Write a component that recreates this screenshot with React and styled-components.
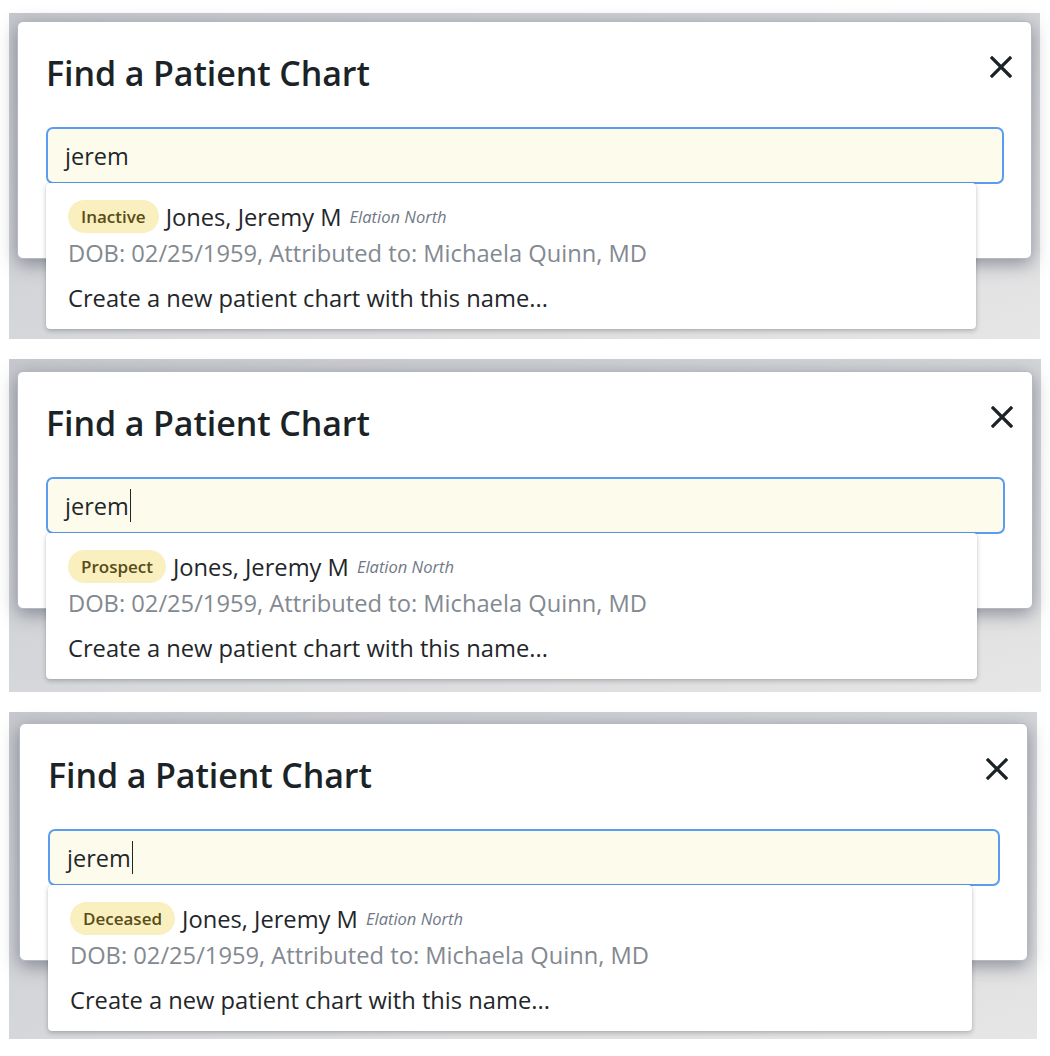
import React from "react"
import styled, { createGlobalStyle } from "styled-components"

const GlobalStyle = createGlobalStyle`
    html, body {
        margin: 0;
        padding: 0;
        background: #ffffff;
    }
    body {
        font-family: "Open Sans", "Noto Sans", Arial, sans-serif;
        -webkit-font-smoothing: antialiased;
    }
`

const Page = styled.div`
    display: flex;
    flex-direction: column;
    gap: 20px;
    padding: 13px 10px 0 9px;
`

// grey overlay behind the modal
const Backdrop = styled.div`
    width: ${(p) => p.$width}px;
    padding: ${(p) => p.$top}px ${(p) => p.$right}px ${(p) => p.$bottom}px ${(p) => p.$left}px;
    box-sizing: border-box;
    background: linear-gradient(165deg, #c8c9ce 0%, #d6d7da 55%, #e6e6e6 100%);
`

const Card = styled.div`
    position: relative;
    background: #ffffff;
    border: 1px solid #b3b8c1;
    border-radius: 6px;
    box-shadow: 0 5px 18px rgba(55, 62, 82, 0.5);
    padding: 31px 27px 74px 28px;
`

const Header = styled.div`
    display: flex;
    justify-content: space-between;
    align-items: flex-start;
`

const Title = styled.h1`
    margin: 0;
    font-size: 34px;
    line-height: 41px;
    font-weight: 600;
    color: #1b2327;
    letter-spacing: -0.1px;
`

const CloseButton = styled.button`
    display: flex;
    align-items: center;
    justify-content: center;
    width: 28px;
    height: 28px;
    margin: 0 -11px 0 0;
    padding: 0;
    border: none;
    background: none;
    cursor: pointer;
    color: #1b2327;
`

const FieldWrap = styled.div`
    position: relative;
    margin-top: 33px;
`

const SearchField = styled.div`
    display: flex;
    align-items: center;
    height: 57px;
    box-sizing: border-box;
    padding: 0 17px;
    border: 2px solid #5a9cf0;
    border-radius: 7px;
    background: #fdfbec;
    font-size: 23.5px;
    color: #1f272b;
`

const Caret = styled.span`
    display: inline-block;
    width: 1.5px;
    height: 33px;
    margin-left: 1px;
    background: #1f272b;
`

const Dropdown = styled.div`
    position: absolute;
    top: calc(100% - 1px);
    left: 0;
    right: 28px;
    background: #ffffff;
    border-radius: 4px;
    box-shadow: 0 2px 5px rgba(0, 0, 0, 0.22), 0 0 1px rgba(0, 0, 0, 0.2);
    padding: 17px 22px 14px;
    z-index: 2;
`

const PatientRow = styled.div`
    display: flex;
    align-items: center;
    gap: 7px;
    height: 33px;
`

const Badge = styled.span`
    display: inline-flex;
    align-items: center;
    height: 33px;
    padding: 0 13px;
    border-radius: 17px;
    background: #f9efbf;
    color: #584c17;
    font-size: 17px;
    font-weight: 600;
`

const Name = styled.span`
    font-size: 23.7px;
    color: #1f272b;
`

const Practice = styled.span`
    margin-left: 1px;
    font-size: 16.5px;
    font-style: italic;
    color: #6f7884;
`

const Details = styled.div`
    margin-top: 4px;
    font-size: 23.7px;
    line-height: 33px;
    color: #838990;
`

const CreateOption = styled.div`
    margin-top: 12px;
    font-size: 23.7px;
    line-height: 33px;
    color: #1f272b;
    cursor: pointer;
`

const CloseIcon = () => (
    <svg width="22" height="22" viewBox="0 0 22 22" fill="none">
        <path d="M2 2L20 20M20 2L2 20" stroke="currentColor" strokeWidth="3.2" strokeLinecap="square" />
    </svg>
)

const panels = [
    { status: "Inactive", caret: false, width: 1031, top: 8, left: 8, right: 8, bottom: 80 },
    { status: "Prospect", caret: true, width: 1032, top: 12, left: 8, right: 8, bottom: 83 },
    { status: "Deceased", caret: true, width: 1028, top: 11, left: 10, right: 9, bottom: 78 },
]

const FindPatientModal = ({ panel }) => (
    <Backdrop
        $width={panel.width}
        $top={panel.top}
        $left={panel.left}
        $right={panel.right}
        $bottom={panel.bottom}
    >
        <Card>
            <Header>
                <Title>Find a Patient Chart</Title>
                <CloseButton aria-label="Close">
                    <CloseIcon />
                </CloseButton>
            </Header>
            <FieldWrap>
                <SearchField>
                    jerem
                    {panel.caret && <Caret />}
                </SearchField>
                <Dropdown>
                    <PatientRow>
                        <Badge>{panel.status}</Badge>
                        <Name>Jones, Jeremy M</Name>
                        <Practice>Elation North</Practice>
                    </PatientRow>
                    <Details>DOB: 02/25/1959, Attributed to: Michaela Quinn, MD</Details>
                    <CreateOption>Create a new patient chart with this name...</CreateOption>
                </Dropdown>
            </FieldWrap>
        </Card>
    </Backdrop>
)

const App = () => (
    <>
        <GlobalStyle />
        <Page>
            {panels.map((panel) => (
                <FindPatientModal key={panel.status} panel={panel} />
            ))}
        </Page>
    </>
)

export default App
